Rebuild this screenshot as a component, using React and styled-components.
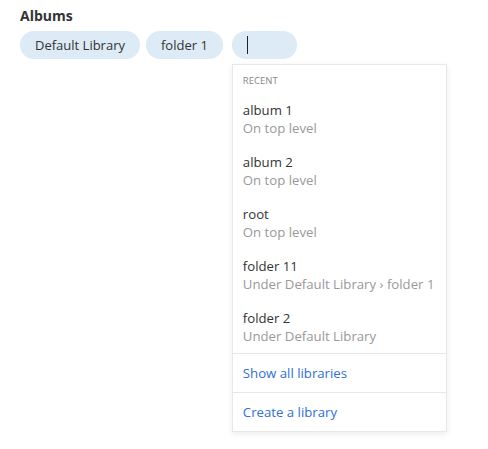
import styled, { createGlobalStyle } from 'styled-components'

const GlobalStyle = createGlobalStyle`
  body {
    margin: 0;
    background: #fff;
    font-family: "Open Sans", "Liberation Sans", sans-serif;
    color: #333;
  }
  #root {
    min-height: 449px;
  }
`

const recent = [
  { name: 'album 1', where: 'On top level' },
  { name: 'album 2', where: 'On top level' },
  { name: 'root', where: 'On top level' },
  { name: 'folder 11', where: 'Under Default Library › folder 1' },
  { name: 'folder 2', where: 'Under Default Library' },
]

const App = () => {
  return <>
    <GlobalStyle />
    <Field>
      <Label>Albums</Label>
      <ChipRow>
        <Chip>Default Library</Chip>
        <Chip>folder 1</Chip>
        <InputWrap>
          <InputChip>
            <Caret />
          </InputChip>
          <Menu>
            <MenuHeader>Recent</MenuHeader>
            {recent.map((item) => (
              <Item key={item.name}>
                <ItemName>{item.name}</ItemName>
                <ItemWhere>{item.where}</ItemWhere>
              </Item>
            ))}
            <MenuLink>Show all libraries</MenuLink>
            <MenuLink>Create a library</MenuLink>
          </Menu>
        </InputWrap>
      </ChipRow>
    </Field>
  </>
}
export default App

const Field = styled.div`
  padding: 6px 20px 0;
`
const Label = styled.div`
  font-size: 14px;
  font-weight: 700;
  line-height: 20px;
  color: #333;
  margin-bottom: 5px;
`
const ChipRow = styled.div`
  display: flex;
  align-items: flex-start;
  gap: 6px;
`
const Chip = styled.div`
  height: 28px;
  line-height: 28px;
  padding: 0 15px;
  border-radius: 14px;
  background: #dcebf5;
  font-size: 13px;
  color: #333;
  white-space: nowrap;
`
const InputWrap = styled.div`
  display: flex;
  flex-direction: column;
  gap: 5px;
  margin-left: 3px;
`
const InputChip = styled.div`
  width: 65px;
  height: 28px;
  border-radius: 14px;
  background: #dcebf5;
  display: flex;
  align-items: center;
  padding-left: 15px;
  box-sizing: border-box;
`
const Caret = styled.span`
  display: block;
  width: 1px;
  height: 18px;
  background: #222;
`
const Menu = styled.div`
  width: 215px;
  background: #fff;
  border: 1px solid #e8e8e8;
  box-shadow: 0 2px 6px rgba(0, 0, 0, 0.08);
  box-sizing: border-box;
`
const MenuHeader = styled.div`
  padding: 9px 10px 6px;
  font-size: 9.5px;
  line-height: 13px;
  text-transform: uppercase;
  color: #888;
`
const Item = styled.div`
  padding: 8px 10px;
  font-size: 13.2px;
  line-height: 18px;
  white-space: nowrap;
`
const ItemName = styled.div`
  color: #333;
`
const ItemWhere = styled.div`
  color: #999;
`
const MenuLink = styled.div`
  border-top: 1px solid #e6e6e6;
  padding: 10px 10px;
  font-size: 13.2px;
  line-height: 18px;
  color: #2f6fd6;
`
